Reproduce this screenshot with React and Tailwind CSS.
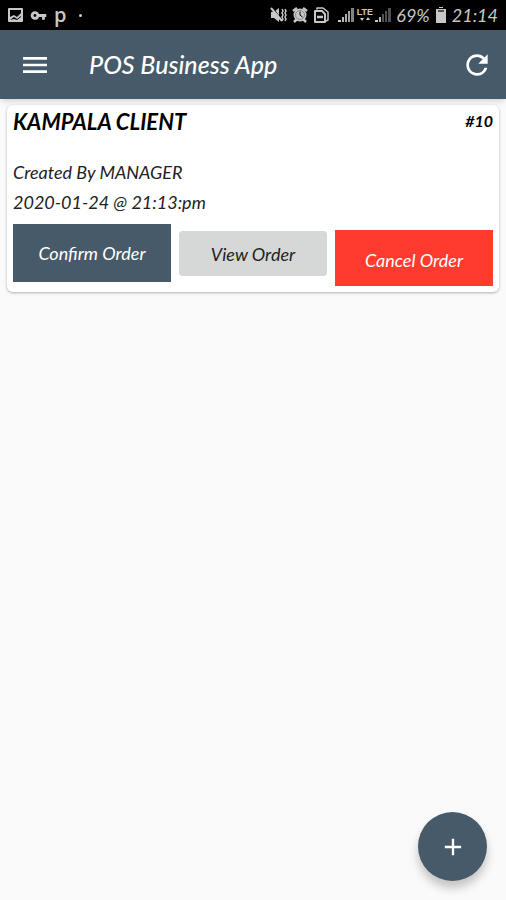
import React from 'react';
import { MdAdd, MdMenu, MdRefresh, MdVpnKey } from 'react-icons/md';

const PictureIcon = () => (
  <svg className="h-4 w-4" viewBox="0 0 16 16" aria-hidden="true">
    <rect x="1" y="1" width="15" height="14" rx="1" fill="currentColor" />
    <path fill="#000" d="M3 3h11v3l-4 4-3-2-4 2zM3 13l4-3 3 2 4-3v1l-4 3-3-1z" />
  </svg>
);

const MutedIcon = () => (
  <svg className="h-4 w-[17px]" viewBox="0 0 17 16" aria-hidden="true">
    <path fill="currentColor" d="M1 5h3l5-4v14l-5-4H1z" />
    <path stroke="#000" strokeWidth="1" d="M3 1l9 12" />
    <path stroke="currentColor" strokeWidth="2" d="M1 1l11 13" />
    <path fill="none" stroke="currentColor" strokeWidth="1.5" d="M12 2l1 2-1 2 1 2-1 2 1 2-1 2M15 2l1 2-1 2 1 2-1 2 1 2-1 2" />
  </svg>
);

const AlarmIcon = () => (
  <svg className="h-4 w-4" viewBox="0 0 16 16" aria-hidden="true">
    <path stroke="currentColor" strokeWidth="2.5" d="M1 4l4-3M15 4l-4-3M2 15l3-3M14 15l-3-3" />
    <circle cx="8" cy="8" r="6.5" fill="currentColor" />
    <circle cx="8" cy="8" r="4.5" fill="none" stroke="#000" strokeWidth="0.6" opacity="0.5" />
    <path fill="none" stroke="#000" strokeWidth="1" d="M8 4.5V8l2.5 2" />
  </svg>
);

const SaverIcon = () => (
  <svg className="h-4 w-4" viewBox="0 0 16 16" fill="none" stroke="currentColor" aria-hidden="true">
    <path strokeWidth="1.5" strokeLinejoin="round" d="M4 2.5V1h6l5 4v8l-2 1" />
    <path strokeWidth="2" strokeLinejoin="round" d="M2 4h7l3 3v8H2z" />
    <path strokeWidth="2.5" d="M4 10h6" />
  </svg>
);

const SignalIcon = ({ level }) => (
  <svg className="h-4 w-4" viewBox="0 0 16 16" fill="currentColor" aria-hidden="true">
    <rect x="0" y="13" width="3" height="2" />
    <rect x="4" y="10" width="2" height="5" opacity={level > 1 ? 0.9 : 0.4} />
    <rect x="7" y="7" width="2" height="8" opacity={level > 2 ? 0.85 : 0.4} />
    <rect x="10" y="4" width="2" height="11" opacity={level > 3 ? 0.8 : 0.4} />
    <rect x="13" y="1" width="3" height="14" opacity={level > 4 ? 0.65 : 0.4} />
  </svg>
);

const BatteryIcon = () => (
  <svg className="h-4 w-3" viewBox="0 0 12 16" fill="currentColor" aria-hidden="true">
    <path d="M4 0h4v1H4zM1 2h10v14H1z" />
    <path fill="#000" opacity="0.6" d="M3 3h6v2H3z" />
  </svg>
);

const StatusBar = () => (
  <div className="flex h-[30px] items-center justify-between bg-black pl-[7px] pr-2 text-[#c8c8c8]">
    <div className="flex items-center gap-[7px]">
      <PictureIcon />
      <MdVpnKey className="h-[17px] w-[17px]" />
      <span className="font-['Open_Sans',sans-serif] text-xl leading-5 font-semibold not-italic">p</span>
      <span className="ml-1.5 h-[3px] w-[3px] rounded-full bg-current" />
    </div>
    <div className="flex items-center gap-[5px]">
      <MutedIcon />
      <AlarmIcon />
      <SaverIcon />
      <div className="ml-1 flex items-center gap-0.5">
        <SignalIcon level={5} />
        <div className="flex w-[17px] flex-col items-center">
          <span className="font-['Liberation_Sans',sans-serif] text-[9px] leading-2 font-bold not-italic">LTE</span>
          <svg className="h-1.5 w-2.5" viewBox="0 0 10 6" fill="currentColor" aria-hidden="true">
            <path d="M0 2h4L2 5zM6 4h4L8 1z" />
          </svg>
        </div>
        <SignalIcon level={2} />
      </div>
      <span className="text-lg leading-5">69%</span>
      <BatteryIcon />
      <span className="text-lg leading-5 tabular-nums">21:14</span>
    </div>
  </div>
);

const AppBar = () => (
  <header className="relative flex h-[69px] items-center bg-[#465a69] px-[19px] text-white shadow-md">
    <button type="button" aria-label="Open menu">
      <MdMenu className="h-8 w-8" />
    </button>
    <h1 className="ml-[38px] flex-1 text-[25px] font-medium">POS Business App</h1>
    <button type="button" aria-label="Refresh" className="-mr-1.5">
      <MdRefresh className="h-8 w-8" />
    </button>
  </header>
);

const OrderCard = ({ order }) => (
  <article className="rounded-md bg-white px-1.5 pb-1.5 shadow-[0_1px_3px_rgba(0,0,0,0.3)]">
    <div className="flex h-8 items-center justify-between font-bold text-black">
      <h2 className="text-[22px]">{order.client}</h2>
      <span className="text-base">#{order.number}</span>
    </div>
    <div className="mt-5 text-lg leading-[30px] text-[#222]">
      <p>Created By {order.createdBy}</p>
      <p>{order.createdAt}</p>
    </div>
    <div className="mt-[7px] grid grid-cols-[158fr_148fr_158fr] items-start gap-2 text-lg">
      <button type="button" className="h-[58px] bg-[#465a69] text-white">Confirm Order</button>
      <button type="button" className="mt-[7px] h-[45px] rounded-sm bg-[#d6d8d7] text-[#222]">View Order</button>
      <button type="button" className="mt-1.5 h-14 bg-[#ff3b2f] pt-1 text-white">Cancel Order</button>
    </div>
  </article>
);

const orders = [
  { client: 'KAMPALA CLIENT', number: 10, createdBy: 'MANAGER', createdAt: '2020-01-24 @ 21:13:pm' },
];

const App = () => {
  return (
    <div className="flex min-h-screen flex-col bg-[#fafafa] font-['Lato','Open_Sans',sans-serif] italic">
      <StatusBar />
      <AppBar />
      <main className="flex-1 px-[7px] pt-1.5">
        {orders.map((order) => (
          <OrderCard key={order.number} order={order} />
        ))}
      </main>
      <button
        type="button"
        aria-label="Add order"
        className="fixed right-[19px] bottom-[19px] flex h-[69px] w-[69px] items-center justify-center rounded-full bg-[#465a69] text-white shadow-[0_7px_10px_rgba(0,0,0,0.22)]"
      >
        <MdAdd className="h-7 w-7" />
      </button>
    </div>
  );
};

export default App;
